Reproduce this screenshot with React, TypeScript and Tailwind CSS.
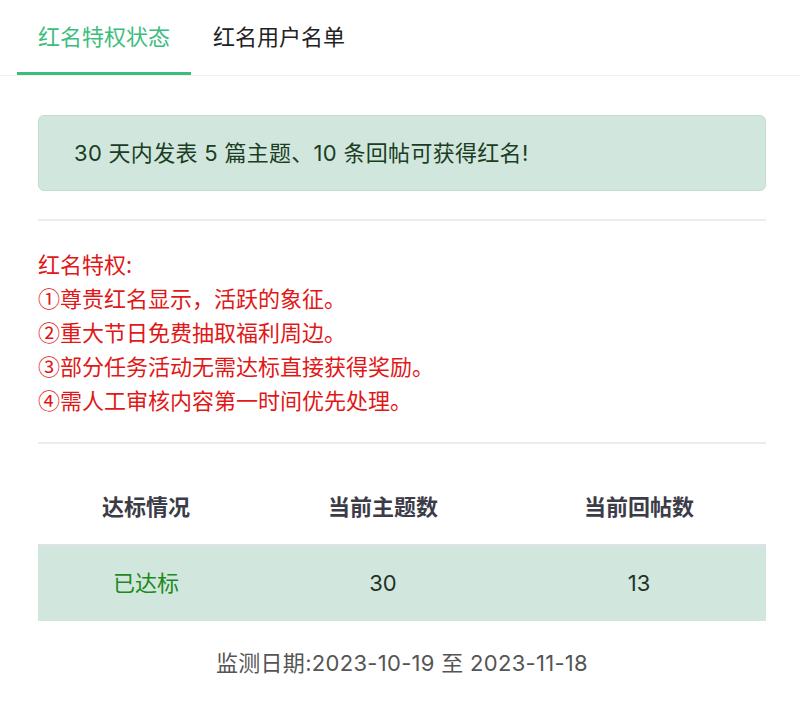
export default function App() {
  const perks = [
    "①尊贵红名显示，活跃的象征。",
    "②重大节日免费抽取福利周边。",
    "③部分任务活动无需达标直接获得奖励。",
    "④需人工审核内容第一时间优先处理。",
  ]

  return (
    <div
      className="min-h-[706px] bg-white text-[22px]"
      style={{ fontFamily: 'Inter, "Noto Sans CJK SC", sans-serif' }}
    >
      {/* Tabs */}
      <div className="flex border-b border-[#f0f0f0] pl-[17px]">
        <div className="flex h-[75px] items-center border-b-[3px] border-[#3dbd7d] px-[21px] pt-[3px] text-[#3dbd7d]">
          红名特权状态
        </div>
        <div className="flex h-[75px] items-center px-[22px] text-[#222]">红名用户名单</div>
      </div>

      <div className="pl-[38px] pr-[34px] pt-[39px]">
        {/* Notice */}
        <div className="flex h-[76px] items-center rounded-[6px] border border-[#c3dfcc] bg-[#d1e7dd] pl-[35px] tracking-[0.3px] text-[#1b3d24]">
          30 天内发表 5 篇主题、10 条回帖可获得红名!
        </div>

        <div className="mt-[28px] border-t-2 border-[#ececec]" />

        {/* Perks */}
        <div
          className="mt-[25px] leading-[34px] text-[#e01818]"
          style={{ fontFamily: '"Noto Sans CJK SC", sans-serif' }}
        >
          <div>红名特权:</div>
          {perks.map((p) => (
            <div key={p}>{p}</div>
          ))}
        </div>

        <div className="mt-[26px] border-t-2 border-[#ececec]" />

        {/* Stats table */}
        <div className="mt-[26px]">
          <div className="grid h-[76px] grid-cols-[216px_258px_1fr] items-center border-b-2 border-[#dee2e6] text-center font-bold text-[#3c3c48]">
            <div>达标情况</div>
            <div>当前主题数</div>
            <div>当前回帖数</div>
          </div>
          <div className="grid h-[75px] grid-cols-[216px_258px_1fr] items-center bg-[#d1e7dd] text-center text-[#1f3325]">
            <div className="text-[#1e8a1e]">已达标</div>
            <div>30</div>
            <div>13</div>
          </div>
        </div>

        <div className="mt-[26px] text-center tracking-[0.3px] text-[#555]">
          监测日期:2023-10-19 至 2023-11-18
        </div>
      </div>
    </div>
  )
}
